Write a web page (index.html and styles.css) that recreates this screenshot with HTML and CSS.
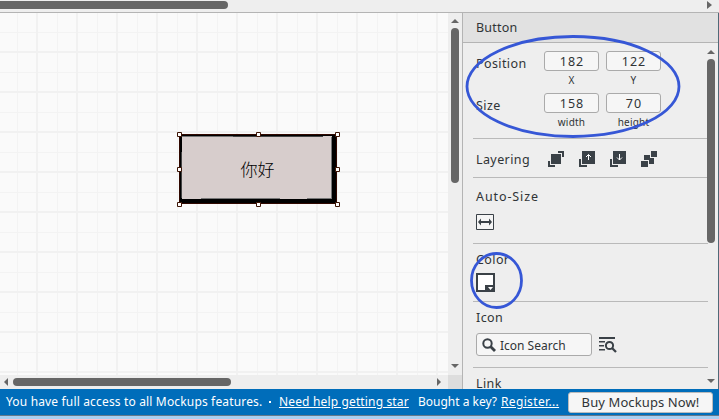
FILE: index.html
```html
<!DOCTYPE html>
<html lang="en">
<head>
<meta charset="utf-8">
<title>Mockups</title>
<link rel="stylesheet" href="styles.css">
</head>
<body>
<div class="app">
  <div class="top-scroll">
    <div class="thumb top-thumb"></div>
    <svg class="top-arrow" width="5" height="8"><path d="M0 0L5 4L0 8Z"/></svg>
  </div>
  <div class="main">
    <div class="workspace">
      <div class="canvas">
        <div class="mock-button">
          <svg class="frame" width="161" height="73" viewBox="0 0 161 73">
            <path fill="#000" d="M2 2H159V71H2Z"/>
            <path fill="#d7cdcc" d="M5 4H155V67H5Z"/>
            <path fill="none" stroke="#777" d="M5 4.500H56M24 66.500H103M130 66.500H155M154.500 5V66"/>
            <path fill="none" stroke="#444" d="M56 4.500H146M4.500 20V66"/>
            <path fill="none" stroke="#300800" d="M2.500 2.500H159.500V71.500H2.500Z"/>
            <g fill="#fff" stroke="#3d1405"><path d="M.5.500h4v4h-4zM79.500.500h4v4h-4zM158.500.500h4v4h-4zM.5 35.500h4v4h-4zM158.500 35.500h4v4h-4zM.5 70.500h4v4h-4zM79.500 70.500h4v4h-4zM158.500 70.500h4v4h-4z"/></g>
          </svg>
          <span class="mock-label">你好</span>
        </div>
      </div>
      <div class="v-scroll">
        <svg width="8" height="4"><path d="M0 4L4 0L8 4Z"/></svg>
        <div class="thumb v-thumb"></div>
        <svg class="v-down" width="8" height="4"><path d="M0 0L4 4L8 0Z"/></svg>
      </div>
      <div class="h-scroll">
        <svg width="4" height="8"><path d="M4 0L0 4L4 8Z"/></svg>
        <div class="thumb h-thumb"></div>
        <svg class="h-right" width="4" height="8"><path d="M0 0L4 4L0 8Z"/></svg>
      </div>
      <div class="corner"></div>
    </div>
    <div class="panel">
      <div class="panel-title">Button</div>
      <div class="panel-body">
        <div class="sections">
          <section class="geometry">
            <div class="label">Position</div>
            <div class="field"><div class="box">182</div><small>X</small></div>
            <div class="field"><div class="box">122</div><small>Y</small></div>
            <div class="label">Size</div>
            <div class="field"><div class="box">158</div><small>width</small></div>
            <div class="field"><div class="box">70</div><small>height</small></div>
          </section>
          <section class="layering">
            <div class="label wide">Layering</div>
            <svg width="16" height="16"><path d="M3 3h10v10H3zM10 0h6v6h-2V2h-4zM0 10h2v4h5v2H0z"/></svg>
            <svg width="16" height="16"><path d="M3 0h13v13H3zM0 8h2v6h6v2H0z"/><path class="glyph" d="M9.500 9V3.500M7 6L9.500 3.500L12 6"/></svg>
            <svg width="16" height="16"><path d="M3 0h13v13H3zM0 8h2v6h6v2H0z"/><path class="glyph" d="M9.500 3V9M7 6.500L9.500 9L12 6.500"/></svg>
            <svg width="16" height="16"><path d="M10 0h6v6h-6zM3 4h6v3h4v6H8V9H3zM0 10h7v6H0z"/></svg>
          </section>
          <section class="autosize">
            <div class="label auto-label">Auto-Size</div>
            <svg width="18" height="16"><path class="outline" d="M.5.500h17v15H.5z"/><path d="M2 8l3-3.500V7h8V4.500L16 8l-3 3.500V9H5v2.500z"/></svg>
          </section>
          <section class="color">
            <div class="label">Color</div>
            <svg width="19" height="19"><path d="M0 0h19v19H0z"/><path fill="#fff" d="M2 2h15v10H9v5H2zM12 14h5l-2.500 3z"/></svg>
          </section>
          <section class="icon">
            <div class="label">Icon</div>
            <div class="icon-row">
              <div class="search">
                <svg width="14" height="14" viewBox="0 0 14 14"><g fill="none" stroke="#3a4147"><circle cx="5.500" cy="5.500" r="4.200" stroke-width="2"/><path d="M8.500 8.500L13 13" stroke-width="2.800"/></g></svg>
                <span>Icon Search</span>
              </div>
              <svg width="18" height="16"><path d="M0 0h16v2H0zM0 4h6v1.500H0zM0 8h5v1.500H0zM0 12h6v1.500H0z"/><g fill="none" stroke="#3a4147"><circle cx="10.500" cy="8.500" r="3.600" stroke-width="2"/><path d="M13 11l4 4" stroke-width="2.300"/></g></svg>
            </div>
          </section>
          <section class="link"><div class="label">Link</div></section>
        </div>
        <div class="panel-scroll">
          <svg width="8" height="4"><path d="M0 4L4 0L8 4Z"/></svg>
          <div class="thumb p-thumb"></div>
          <svg class="p-down" width="8" height="4"><path d="M0 0L4 4L8 0Z"/></svg>
        </div>
      </div>
    </div>
  </div>
  <div class="footer">
    <span class="status">You have full access to all Mockups features.</span>
    <span class="dot"></span>
    <a class="help">Need help getting star</a>
    <span class="bought">Bought a key?</span>
    <a class="register">Register...</a>
    <div class="buy">Buy Mockups Now!</div>
  </div>
  <div class="window-edge"></div>
  <svg class="marks" width="719" height="419"><ellipse cx="573" cy="86.500" rx="106" ry="50"/><ellipse cx="496.500" cy="280.500" rx="25" ry="27"/></svg>
</div>
</body>
</html>
```

FILE: styles.css
```css
* { box-sizing: border-box; }
body { margin: 0; overflow: hidden; font: 12.5px/16px "Noto Sans", sans-serif; color: #303436; }
svg { display: block; fill: #3a4147; flex: none; }
.app { position: relative; width: 719px; height: 419px; background: #eee; }
.thumb { background: #666; border-radius: 4px; }
.top-scroll { height: 13px; display: flex; justify-content: space-between; padding: 1px 7px 0 0; border-bottom: 1px solid #b4b4b4; }
.top-thumb { width: 228px; height: 8px; border-radius: 0 4px 4px 0; }
.top-scroll svg, .v-scroll svg, .h-scroll svg, .panel-scroll svg { fill: #666; }
.main { height: 376px; display: flex; }
.workspace { width: 462px; display: grid; grid-template: 362px 14px / 448px 14px; }
.canvas {
  position: relative;
  background-color: #fafafa;
  background-image:
    linear-gradient(90deg, #f1f1f1 2px, transparent 2px),
    linear-gradient(#f1f1f1 2px, transparent 2px),
    linear-gradient(90deg, #f3f3f3 1px, transparent 1px),
    linear-gradient(#f3f3f3 1px, transparent 1px);
  background-size: 40px 40px;
  background-position: 36px 0, 0 38px, 17px 0, 0 19px;
}
.mock-button { position: absolute; left: 177px; top: 119px; width: 163px; height: 75px; display: flex; align-items: center; justify-content: center; }
.frame { position: absolute; left: 0; top: 0; overflow: visible; }
.mock-label { position: relative; left: -1px; top: -1px; font: 17px/20px "Noto Sans CJK SC", sans-serif; font-weight: 300; color: #000; }
.v-scroll { background: #eee; display: flex; flex-direction: column; align-items: center; padding: 6px 0 7px; }
.v-thumb { width: 8px; height: 155px; margin-top: 5px; }
.v-down, .p-down { margin-top: auto; }
.h-scroll { display: flex; align-items: center; padding: 0 7px 0 4px; }
.h-thumb { width: 218px; height: 8px; margin-left: 5px; }
.h-right { margin-left: auto; }
.corner { background: #ddd; }
.panel { width: 257px; border-left: 1px solid #b4b4b4; border-right: 1px solid #506a78; display: flex; flex-direction: column; }
.panel-title { height: 30px; padding: 7px 13px; background: #e1e1e1; border-bottom: 1px solid #b4b4b4; letter-spacing: .2px; }
.panel-body { flex: 1; display: flex; overflow: hidden; }
.sections { width: 245px; padding-left: 10px; }
section { border-bottom: 1px solid #b9b9b9; padding-left: 3px; }
.label { letter-spacing: .4px; }
.auto-label { letter-spacing: .9px; }
.geometry { height: 96px; padding-top: 8px; display: grid; grid-template-columns: 68px 62px 55px; grid-auto-rows: 42px; }
.geometry .label { padding-top: 5px; }
.field { width: 55px; text-align: center; }
.box { height: 20px; line-height: 19px; border: 1px solid #aaa; border-radius: 3px; background: #f6f6f6; letter-spacing: 1px; padding-left: 1px; }
small { display: block; font-size: 10px; line-height: 14px; margin-top: 2px; letter-spacing: .2px; }
.layering { height: 39px; display: flex; gap: 15px; padding-top: 12px; }
.wide { width: 57px; padding-top: 1px; }
.glyph { fill: none; stroke: #fff; }
.outline { fill: #f5f5f5; stroke: #3a4147; }
.autosize { height: 66px; padding-top: 11px; }
.autosize svg { margin-top: 9px; }
.color { height: 58px; padding-top: 8px; }
.color svg { margin-top: 5px; }
.icon { height: 66px; padding-top: 8px; }
.icon-row { display: flex; gap: 7px; margin-top: 7px; }
.icon-row > svg { margin-top: 4px; }
.search { width: 116px; height: 23px; display: flex; gap: 4px; padding: 4px 5px; border: 1px solid #aaa; border-radius: 3px; background: #f6f6f6; font-size: 12px; line-height: 15px; }
.link { border: 0; padding-top: 8px; }
.panel-scroll { width: 8px; margin-left: -1px; display: flex; flex-direction: column; align-items: center; padding: 7px 0 6px; }
.p-thumb { width: 8px; height: 184px; margin-top: 5px; }
.footer { height: 26px; display: flex; align-items: center; padding-left: 6px; background: #006dba; color: #fff; font-size: 12px; white-space: nowrap; }
.status { width: 263px; letter-spacing: .16px; }
.dot { width: 2px; height: 2px; margin-right: 1px; background: #fff; }
.help { width: 130px; margin-left: 7px; letter-spacing: .15px; text-decoration: underline; }
.bought { width: 83px; margin-left: 9px; }
.register { width: 67px; letter-spacing: .35px; text-decoration: underline; }
.buy { width: 145px; height: 21px; border: 1px solid #bbb; border-radius: 3px; background: #f6f6f6; color: #303436; text-align: center; line-height: 19px; font-size: 13px; letter-spacing: .1px; }
.window-edge { height: 4px; border-top: 1px solid #66798b; background: #a9cff1; }
.marks { position: absolute; left: 0; top: 0; fill: none; stroke: #3657d6; stroke-width: 2.8px; }
```
